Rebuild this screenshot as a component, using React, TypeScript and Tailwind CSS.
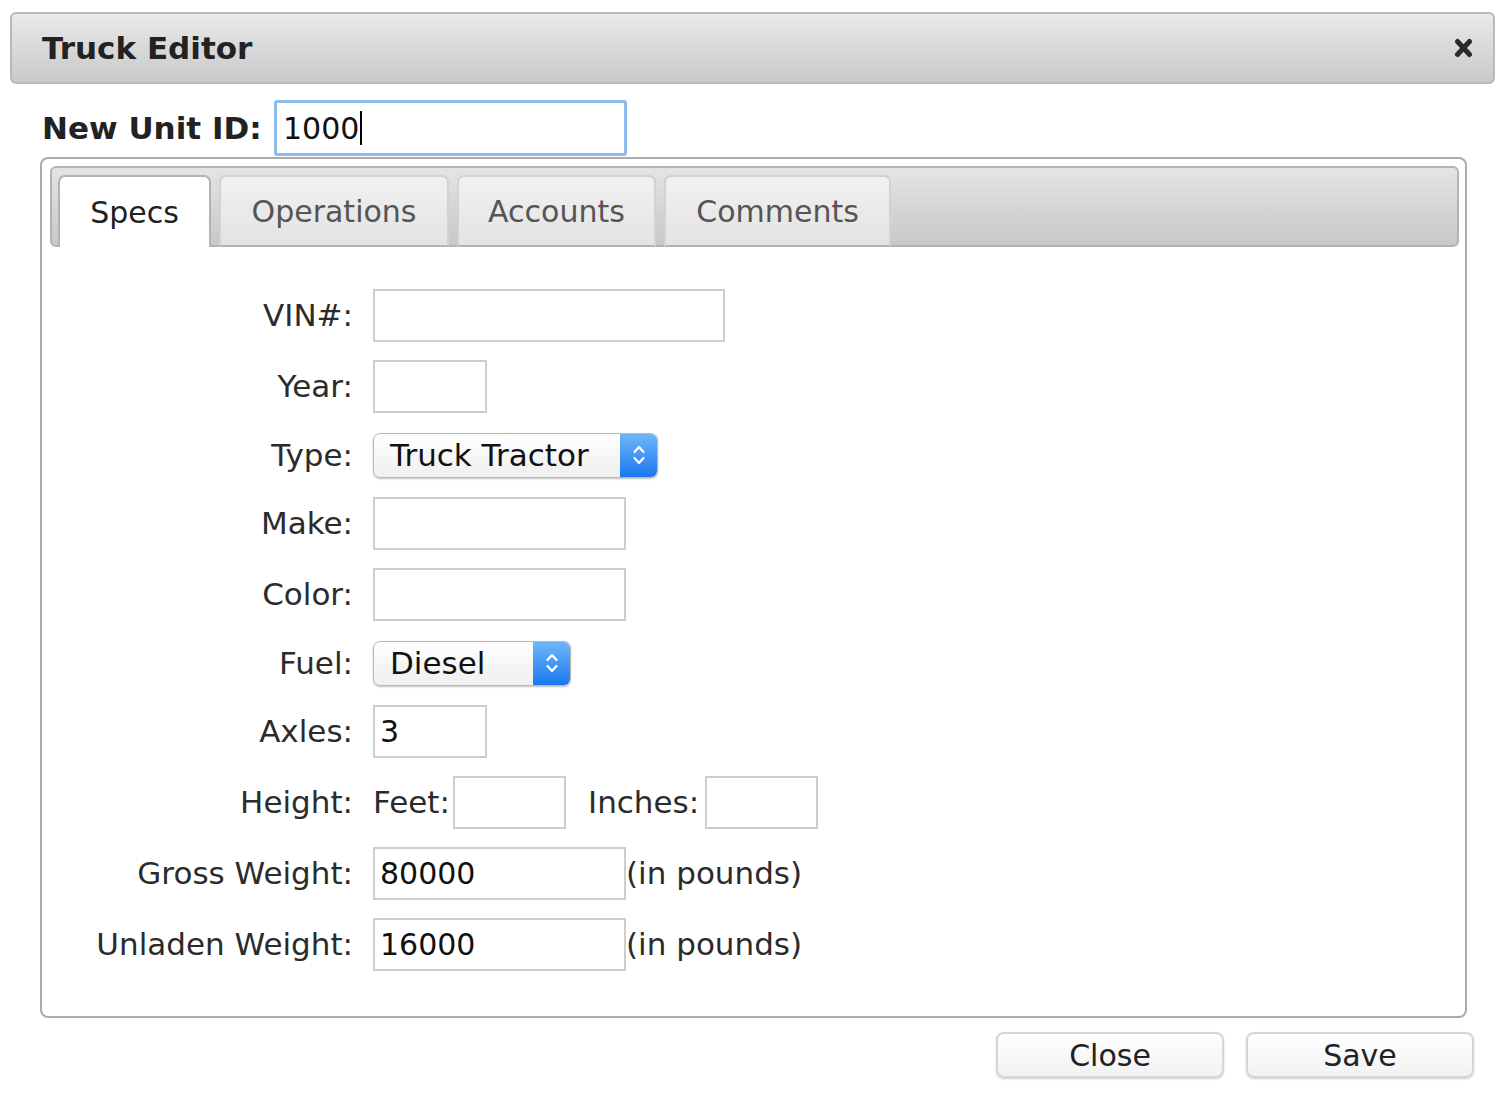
import React from "react";

function TextInput({ w, value }: { w: string; value?: string }) {
  return (
    <input
      readOnly
      value={value ?? ""}
      className={`${w} h-[53px] border-2 border-[#cecece] bg-white px-[5px] text-[30px] text-[#111] outline-none font-['DejaVu_Sans',sans-serif]`}
    />
  );
}

function Select({ w, value }: { w: string; value: string }) {
  return (
    <div
      className={`${w} h-[45px] flex items-stretch rounded-[7px] border border-[#b9b9b9] shadow-[0_1px_2px_rgba(0,0,0,0.25)] bg-linear-to-b from-white to-[#efefef] overflow-hidden`}
    >
      <div className="flex-1 flex items-center pl-[16px] text-[31px] text-[#111]">{value}</div>
      <div className="w-[37px] flex items-center justify-center bg-linear-to-b from-[#6db6fb] to-[#1877ee]">
        <svg width="16" height="28" viewBox="0 0 16 28" fill="none">
          <path d="M3.5 11 L8 6 L12.5 11" stroke="white" strokeWidth="2.2" strokeLinecap="round" strokeLinejoin="round" />
          <path d="M3.5 17 L8 22 L12.5 17" stroke="white" strokeWidth="2.2" strokeLinecap="round" strokeLinejoin="round" />
        </svg>
      </div>
    </div>
  );
}

function Row({ label, h, children }: { label: string; h: string; children: React.ReactNode }) {
  return (
    <div className={`flex items-center ${h}`}>
      <div className="w-[323px] pr-[20px] text-right text-[31px] text-[#2b2b2b]">{label}</div>
      <div className="flex items-center">{children}</div>
    </div>
  );
}

export default function App() {
  const tabs = [
    { name: "Specs", w: "w-[153px]", active: true },
    { name: "Operations", w: "w-[230px]", active: false },
    { name: "Accounts", w: "w-[199px]", active: false },
    { name: "Comments", w: "w-[227px]", active: false },
  ];
  return (
    <div className="w-[1501px] h-[1102px] bg-white pt-[12px] pl-[10px] pr-[6px] font-['DejaVu_Sans',sans-serif]">
      {/* Title bar */}
      <div className="h-[72px] rounded-[6px] border-2 border-[#b9b9b9] bg-linear-to-b from-[#e9e9e9] to-[#c9c9c9] flex items-center justify-between pl-[30px] pr-[20px]">
        <span className="text-[31px] font-bold text-[#222]">Truck Editor</span>
        <svg width="19" height="20" viewBox="0 0 19 20">
          <path d="M3.5 3.5 L15.5 16.5 M15.5 3.5 L3.5 16.5" stroke="#2a2a2a" strokeWidth="5" strokeLinecap="round" />
        </svg>
      </div>

      <div className="pl-[30px] pr-[28px]">
        {/* New Unit ID */}
        <div className="mt-[16px] flex items-center h-[56px] pl-[2px]">
          <span className="w-[232px] text-[31px] font-bold text-[#222]">New Unit ID:</span>
          <div className="w-[353px] h-[56px] border-[3px] border-[#8ebcea] rounded-[3px] bg-white flex items-center pl-[6px] text-[30px] text-[#111]">
            1000
            <span className="inline-block w-[2px] h-[34px] bg-black ml-[1px]" />
          </div>
        </div>

        {/* Tabs container */}
        <div className="mt-[1px] h-[861px] border-2 border-[#ababab] rounded-[8px] bg-white pt-[7px] pl-[8px] pr-[6px]">
          <div className="h-[81px] border-2 border-[#b3b3b3] rounded-[6px] bg-linear-to-b from-[#e4e4e4] to-[#c8c8c8] flex items-end gap-[8px] pl-[6px]">
            {tabs.map((t) =>
              t.active ? (
                <div
                  key={t.name}
                  className={`${t.w} h-[72px] -mb-[2px] bg-white border-2 border-b-0 border-[#b3b3b3] rounded-t-[7px] flex items-center justify-center text-[30px] text-[#222]`}
                >
                  {t.name}
                </div>
              ) : (
                <div
                  key={t.name}
                  className={`${t.w} h-[72px] -mb-[2px] bg-linear-to-b from-[#f1f1f1] to-[#e3e3e3] border-2 border-[#d2d2d2] border-b-[#b3b3b3] rounded-t-[7px] flex items-center justify-center text-[30px] text-[#555]`}
                >
                  {t.name}
                </div>
              )
            )}
          </div>

          {/* Form */}
          <div className="mt-[42px] flex flex-col gap-[18px]">
            <Row label="VIN#:" h="h-[53px]">
              <TextInput w="w-[352px]" />
            </Row>
            <Row label="Year:" h="h-[53px]">
              <TextInput w="w-[114px]" />
            </Row>
            <Row label="Type:" h="h-[48px]">
              <Select w="w-[285px]" value="Truck Tractor" />
            </Row>
            <Row label="Make:" h="h-[53px]">
              <TextInput w="w-[253px]" />
            </Row>
            <Row label="Color:" h="h-[53px]">
              <TextInput w="w-[253px]" />
            </Row>
            <Row label="Fuel:" h="h-[48px]">
              <Select w="w-[198px]" value="Diesel" />
            </Row>
            <Row label="Axles:" h="h-[53px]">
              <TextInput w="w-[114px]" value="3" />
            </Row>
            <Row label="Height:" h="h-[53px]">
              <span className="w-[80px] text-[31px] text-[#2b2b2b]">Feet:</span>
              <TextInput w="w-[113px]" />
              <span className="ml-[22px] w-[117px] text-[31px] text-[#2b2b2b]">Inches:</span>
              <TextInput w="w-[113px]" />
            </Row>
            <Row label="Gross Weight:" h="h-[53px]">
              <TextInput w="w-[253px]" value="80000" />
              <span className="text-[31px] text-[#2b2b2b]">(in pounds)</span>
            </Row>
            <Row label="Unladen Weight:" h="h-[53px]">
              <TextInput w="w-[253px]" value="16000" />
              <span className="text-[31px] text-[#2b2b2b]">(in pounds)</span>
            </Row>
          </div>
        </div>
      </div>

      {/* Buttons */}
      <div className="mt-[14px] flex justify-end gap-[22px] pr-[21px]">
        <button className="w-[228px] h-[46px] rounded-[8px] border-2 border-[#d6d6d6] bg-linear-to-b from-white to-[#f2f2f2] shadow-[0_1px_2px_rgba(0,0,0,0.2)] text-[30px] text-[#222] flex items-center justify-center">
          Close
        </button>
        <button className="w-[228px] h-[46px] rounded-[8px] border-2 border-[#d6d6d6] bg-linear-to-b from-white to-[#f2f2f2] shadow-[0_1px_2px_rgba(0,0,0,0.2)] text-[30px] text-[#222] flex items-center justify-center">
          Save
        </button>
      </div>
    </div>
  );
}
